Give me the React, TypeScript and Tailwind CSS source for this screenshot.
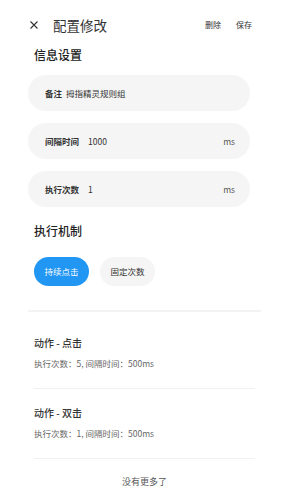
import React from "react";

const font = { fontFamily: '"Noto Sans CJK SC", "Noto Sans", sans-serif' };

function Field({ label, value, unit, gap }: { label: string; value: string; unit?: string; gap: string }) {
  return (
    <div className="flex h-[36px] w-[222px] items-center rounded-full bg-[#f5f5f5] pl-[17px] pr-[15px] text-[8.5px] leading-[12px] text-[#333]">
      <span className="font-bold">{label}</span>
      <span className={gap}>{value}</span>
      {unit && <span className="ml-auto text-[#555]">{unit}</span>}
    </div>
  );
}

function Item({ title, sub }: { title: string; sub: string }) {
  return (
    <div className="ml-[6px] border-b border-[#f1f1f1] pt-[17px] pb-[19px]">
      <div className="h-[14px] text-[10px] font-medium leading-[14px] text-[#333]">{title}</div>
      <div className="mt-[7px] h-[12px] text-[8.5px] leading-[12px] text-[#666]">{sub}</div>
    </div>
  );
}

export default function App() {
  return (
    <div style={font} className="h-[500px] w-[281px] overflow-hidden bg-white">
      <div className="flex h-[49px] items-center">
        <svg className="ml-[30px]" width="8" height="8" viewBox="0 0 8 8">
          <path d="M0.5 0.5 L7.5 7.5 M7.5 0.5 L0.5 7.5" stroke="#333" strokeWidth="1.1" fill="none" />
        </svg>
        <span className="ml-[15px] text-[13.5px] leading-[16px] text-[#333]">配置修改</span>
        <span className="ml-auto text-[8px] leading-[10px] text-[#333]">删除</span>
        <span className="ml-[15px] mr-[29px] text-[8px] leading-[10px] text-[#333]">保存</span>
      </div>
      <div className="px-[28px]">
        <div className="ml-[6px] h-[12px] text-[12px] font-medium leading-[12px] text-[#222]">信息设置</div>
        <div className="mt-[14px] flex flex-col gap-[12px]">
          <Field label="备注" value="拇指精灵规则组" gap="ml-[4px]" />
          <Field label="间隔时间" value="1000" unit="ms" gap="ml-[9px]" />
          <Field label="执行次数" value="1" unit="ms" gap="ml-[9px]" />
        </div>
        <div className="ml-[6px] mt-[18px] h-[12px] text-[12px] font-medium leading-[12px] text-[#222]">执行机制</div>
        <div className="ml-[6px] mt-[20px] flex gap-[11px]">
          <div className="flex h-[29px] w-[55px] items-center justify-center rounded-full bg-[#2196f3] text-[8.5px] text-white">持续点击</div>
          <div className="flex h-[29px] w-[55px] items-center justify-center rounded-full bg-[#f5f5f5] text-[8.5px] text-[#333]">固定次数</div>
        </div>
        <div className="mt-[24px] h-[2px] w-[233px] rounded-full bg-[#f3f3f3]" />
        <div className="mt-[7px] w-[227px]">
          <Item title="动作 - 点击" sub="执行次数：5, 间隔时间：500ms" />
          <Item title="动作 - 双击" sub="执行次数：1, 间隔时间：500ms" />
        </div>
        <div className="mt-[16px] w-[233px] text-center text-[9px] leading-[14px] text-[#555]">没有更多了</div>
      </div>
    </div>
  );
}
